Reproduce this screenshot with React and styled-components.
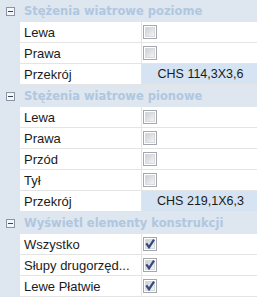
import React from 'react';
import styled, { createGlobalStyle } from 'styled-components';

const GlobalStyle = createGlobalStyle`
  body {
    margin: 0;
    background: #ffffff;
  }
`;

const Grid = styled.div`
  width: 257px;
  height: 297px;
  overflow: hidden;
  font-family: "Liberation Sans", Arial, sans-serif;
  font-size: 13px;
  color: #1b1b1b;
  background: #ffffff;
`;

const Header = styled.div`
  height: 22px;
  display: flex;
  align-items: center;
  background: #dee6ef;
`;

const Expander = styled.div`
  width: 20px;
  display: flex;
  justify-content: center;
  align-items: center;
`;

const Title = styled.span`
  font-family: "DejaVu Sans", Verdana, sans-serif;
  font-weight: bold;
  font-size: 11.5px;
  color: #b0c7e1;
  margin-left: 4px;
  white-space: nowrap;
`;

const Row = styled.div`
  height: 21px;
  display: grid;
  grid-template-columns: 20px 122px 1fr;
`;

const Gutter = styled.div`
  background: #dee6ef;
`;

const Name = styled.div`
  display: flex;
  align-items: center;
  padding-left: 4px;
  border-right: 1px solid #e4e4e4;
  border-bottom: 1px solid #e4e4e4;
  white-space: nowrap;
  overflow: hidden;
`;

const Value = styled.div`
  display: flex;
  align-items: center;
  justify-content: ${(p) => (p.$text ? 'center' : 'flex-start')};
  padding-left: ${(p) => (p.$text ? '2px' : '1px')};
  font-size: 12.5px;
  background: ${(p) => (p.$selected ? '#d5e3f3' : '#ffffff')};
  border-bottom: 1px solid #e4e4e4;
  white-space: nowrap;
`;

const MinusBox = () => (
  <svg width="9" height="9" viewBox="0 0 9 9">
    <rect x="0.5" y="0.5" width="8" height="8" fill="#f4f6f9" stroke="#8a96a6" />
    <path d="M2 4.5h5" stroke="#3b4656" strokeWidth="1" />
  </svg>
);

const Check = ({ checked }) => (
  <svg width="14" height="14" viewBox="0 0 14 14">
    <defs>
      <linearGradient id="cbfill" x1="0" y1="0" x2="1" y2="1">
        <stop offset="0" stopColor="#cbced3" />
        <stop offset="1" stopColor="#f5f6f8" />
      </linearGradient>
    </defs>
    <rect x="0.5" y="0.5" width="13" height="13" fill="#ffffff" stroke="#a3a8b0" />
    <rect x="2.5" y="2.5" width="9" height="9" fill="url(#cbfill)" stroke="#d6d9de" />
    {checked && (
      <path d="M3.3 6.3 L6 10.2 L11 2.6" fill="none" stroke="#34497e" strokeWidth="2.2" />
    )}
  </svg>
);

const groups = [
  {
    title: 'Stężenia wiatrowe poziome',
    rows: [
      { name: 'Lewa', check: false },
      { name: 'Prawa', check: false },
      { name: 'Przekrój', text: 'CHS 114,3X3,6' },
    ],
  },
  {
    title: 'Stężenia wiatrowe pionowe',
    rows: [
      { name: 'Lewa', check: false },
      { name: 'Prawa', check: false },
      { name: 'Przód', check: false },
      { name: 'Tył', check: false },
      { name: 'Przekrój', text: 'CHS 219,1X6,3' },
    ],
  },
  {
    title: 'Wyświetl elementy konstrukcji',
    rows: [
      { name: 'Wszystko', check: true },
      { name: 'Słupy drugorzęd...', check: true },
      { name: 'Lewe Płatwie', check: true },
    ],
  },
];

export default function App() {
  return (
    <>
      <GlobalStyle />
      <Grid>
        {groups.map((g) => (
          <React.Fragment key={g.title}>
            <Header>
              <Expander>
                <MinusBox />
              </Expander>
              <Title>{g.title}</Title>
            </Header>
            {g.rows.map((r, i) => (
              <Row key={i}>
                <Gutter />
                <Name>{r.name}</Name>
                <Value $text={!!r.text} $selected={!!r.text}>
                  {r.text ? r.text : <Check checked={r.check} />}
                </Value>
              </Row>
            ))}
          </React.Fragment>
        ))}
      </Grid>
    </>
  );
}
